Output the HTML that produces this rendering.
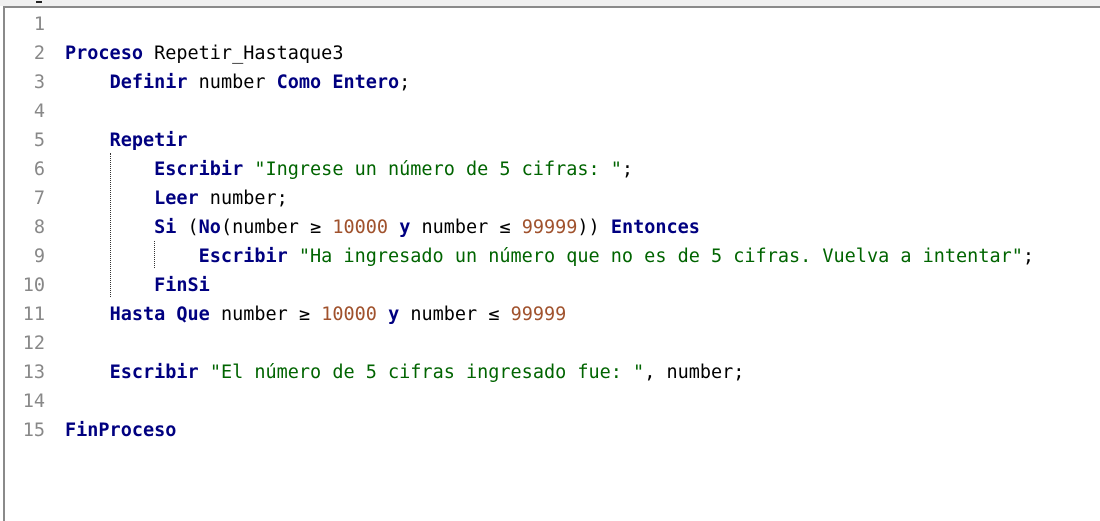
<!DOCTYPE html>
<html><head><meta charset="utf-8"><style>
html,body{margin:0;padding:0;background:#fff;}
body{width:1100px;height:521px;position:relative;overflow:hidden;}
.top{position:absolute;left:0;top:0;width:1100px;height:6px;background:#f0f0f0;}
.tl{position:absolute;left:3px;top:6px;width:1097px;height:2px;background:#8a8a8a;}
.ll{position:absolute;left:3px;top:6px;width:2px;height:515px;background:#8a8a8a;}
.code{position:absolute;left:0;top:10px;font-family:"DejaVu Sans Mono",monospace;font-size:18.5px;line-height:29px;white-space:pre;color:#000;}
.n{display:inline-block;width:45px;text-align:right;color:#888;margin-right:20px;}
.k{color:#000080;font-weight:bold;}
.s{color:#006400;}
.d{color:#a0522d;}
.g{position:absolute;border-left:1px dotted #333;}
</style></head><body>
<div class="top"></div><div class="tl"></div><div class="ll"></div>
<div style="position:absolute;left:36px;top:1px;width:6px;height:2px;background:#222"></div>
<div class="code"><span class="n">1</span>
<span class="n">2</span><span class="k">Proceso</span> Repetir_Hastaque3
<span class="n">3</span>    <span class="k">Definir</span> number <span class="k">Como</span> <span class="k">Entero</span>;
<span class="n">4</span>
<span class="n">5</span>    <span class="k">Repetir</span>
<span class="n">6</span>        <span class="k">Escribir</span> <span class="s">"Ingrese un número de 5 cifras: "</span>;
<span class="n">7</span>        <span class="k">Leer</span> number;
<span class="n">8</span>        <span class="k">Si</span> (<span class="k">No</span>(number ≥ <span class="d">10000</span> <span class="k">y</span> number ≤ <span class="d">99999</span>)) <span class="k">Entonces</span>
<span class="n">9</span>            <span class="k">Escribir</span> <span class="s">"Ha ingresado un número que no es de 5 cifras. Vuelva a intentar"</span>;
<span class="n">10</span>        <span class="k">FinSi</span>
<span class="n">11</span>    <span class="k">Hasta</span> <span class="k">Que</span> number ≥ <span class="d">10000</span> <span class="k">y</span> number ≤ <span class="d">99999</span>
<span class="n">12</span>
<span class="n">13</span>    <span class="k">Escribir</span> <span class="s">"El número de 5 cifras ingresado fue: "</span>, number;
<span class="n">14</span>
<span class="n">15</span><span class="k">FinProceso</span></div>
<div class="g" style="left:110px;top:153px;height:144px"></div>
<div class="g" style="left:154px;top:241px;height:27px"></div>
</body></html>
